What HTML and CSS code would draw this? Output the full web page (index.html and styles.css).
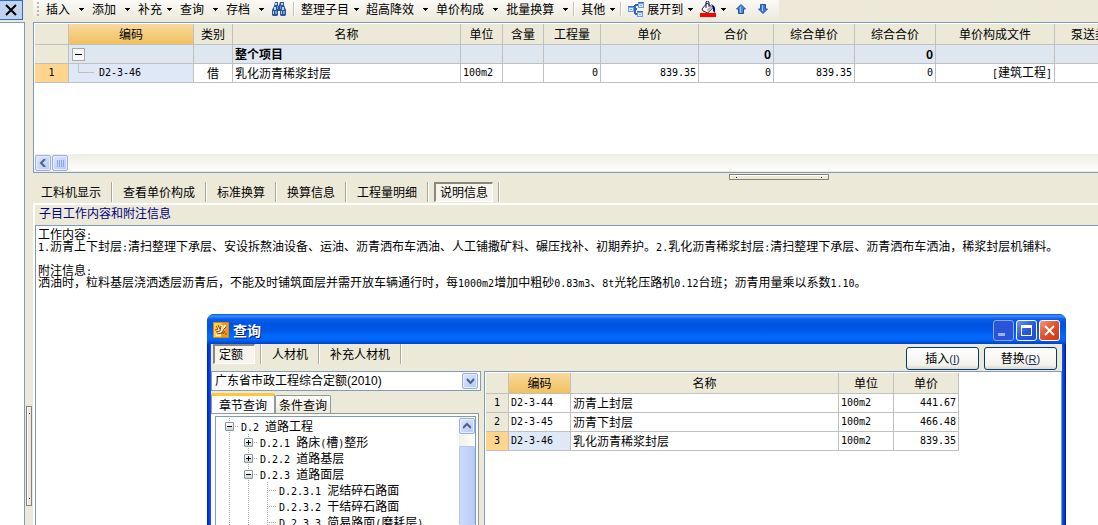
FILE: index.html
```html
<!DOCTYPE html>
<html lang="zh-CN">
<head>
<meta charset="utf-8">
<title>工程计价</title>
<link rel="stylesheet" href="styles.css">
</head>
<body>
<svg class="defs" aria-hidden="true">
  <symbol id="caret" viewBox="0 0 5 3"><path d="M0 0h5v1H4v1H3v1H2V2H1V1H0z"/></symbol>
</svg>
<div class="app">
  <aside class="side">
    <button class="side-close" aria-label="关闭"><svg width="12" height="12" viewBox="0 0 12 12"><path d="M1 1l10 10M11 1L1 11" stroke="#000" stroke-width="2" fill="none"/></svg></button>
    <div class="side-panel"></div>
  </aside>
  <div class="vsplit"><div class="handle handle-v"></div></div>
  <main class="main">
    <nav class="toolbar">
      <span class="grip"></span>
      <button class="tool split">插入<svg class="caret"><use href="#caret"/></svg></button>
      <button class="tool split">添加<svg class="caret"><use href="#caret"/></svg></button>
      <button class="tool drop">补充<svg class="caret"><use href="#caret"/></svg></button>
      <button class="tool split">查询<svg class="caret"><use href="#caret"/></svg></button>
      <button class="tool split tight">存档<svg class="caret"><use href="#caret"/></svg></button>
      <button class="tool" aria-label="查找"><svg width="16" height="14" viewBox="0 0 16 14"><path d="M4 0h3v3l1 1V3l1-3h4v3l2 5v5l-1 1h-4l-1-1V9H7v4l-1 1H2l-1-1V8l2-4z" fill="#2c5499"/><path d="M4 1h2v2H4zM10 1h2v2h-2zM3 5h2v3H3zM11 5h2v3h-2zM2 9h1v3H2zM10 9h1v3h-1z" fill="#b9d3f7"/><path d="M4 9h2v3H4zM12 9h2v3h-2zM6 4h1v3H6zM9 4h1v3H9z" fill="#6e9be0"/></svg></button>
      <span class="sep"></span>
      <button class="tool drop tight">整理子目<svg class="caret"><use href="#caret"/></svg></button>
      <button class="tool split">超高降效<svg class="caret"><use href="#caret"/></svg></button>
      <button class="tool split">单价构成<svg class="caret"><use href="#caret"/></svg></button>
      <button class="tool split tight">批量换算<svg class="caret"><use href="#caret"/></svg></button>
      <span class="sep"></span>
      <button class="tool drop tight">其他<svg class="caret"><use href="#caret"/></svg></button>
      <span class="sep"></span>
      <button class="tool drop tight"><svg class="lead" width="16" height="15" viewBox="0 0 16 15"><path d="M5 7h4M7 3v9M7 3h3M7 12h3" stroke="#2f66c4" stroke-width="2" fill="none"/><path d="M0 4h6v6H0zM10 0h6v6h-6zM9 9h6v6H9z" fill="#6c9bea"/><path d="M1 6h4v3H1zM11 2h4v3h-4zM10 11h4v3h-4z" fill="#dfeaff"/><path d="M0 4h6v1H0zM10 0h6v1h-6zM9 9h6v1H9z" fill="#3468c9"/><path d="M2 7h2v1H2zM12 3h2v1h-2zM11 12h2v1h-2z" fill="#86abed"/></svg>展开到<svg class="caret"><use href="#caret"/></svg></button>
      <button class="tool drop" aria-label="填充颜色"><svg width="16" height="16" viewBox="0 0 16 16"><path d="M2 8l5-6 6 5-5 5-5-2z" fill="#fff" stroke="#222" stroke-width="1"/><path d="M6 7V1q1-2 3 0v5" fill="none" stroke="#101070" stroke-width="1"/><path d="M7 8l5-3 1 2-5 5z" fill="#b4b4b4"/><path d="M11 3l3 2 1 2v5l-2-2V7z" fill="#000080"/><path d="M0 12h16v4H0z" fill="#f00"/></svg><svg class="caret"><use href="#caret"/></svg></button>
      <button class="tool arrow" aria-label="上移"><svg width="10" height="10" viewBox="0 0 10 10"><path d="M5 .5L9.500 5H7.500v4.500h-5V5H.5z" fill="#4d86e8" stroke="#2450a8"/><path d="M4 3h1v6H4z" fill="#a9c8fb"/></svg></button>
      <button class="tool arrow" aria-label="下移"><svg width="10" height="10" viewBox="0 0 10 10"><path d="M5 9.500L9.500 5H7.500V.5h-5V5H.5z" fill="#3f78e0" stroke="#2450a8"/><path d="M4 1h1v6H4z" fill="#a9c8fb"/></svg></button>
    </nav>

    <section class="grid-box">
      <table class="grid budget">
        <colgroup><col class="w34"><col class="w125"><col class="w39"><col class="w228"><col class="w42"><col class="w41"><col class="w57"><col class="w98"><col class="w75"><col class="w81"><col class="w81"><col class="w119"><col class="w81"></colgroup>
        <thead><tr><th></th><th class="active">编码</th><th>类别</th><th>名称</th><th>单位</th><th>含量</th><th>工程量</th><th>单价</th><th>合价</th><th>综合单价</th><th>综合合价</th><th>单价构成文件</th><th>泵送类型</th></tr></thead>
        <tbody>
          <tr class="total"><td class="rowno"></td><td class="code"><span class="node"><button class="fold" aria-label="折叠"></button></span></td><td></td><td>整个项目</td><td></td><td></td><td></td><td></td><td class="num">0</td><td></td><td class="num">0</td><td></td><td></td></tr>
          <tr><td class="rowno current n">1</td><td class="code picked"><span class="node"><i class="elbow"></i><span class="n">D2-3-46</span></span></td><td class="mid">借</td><td>乳化沥青稀浆封层</td><td class="n">100m2</td><td></td><td class="num n">0</td><td class="num n">839.35</td><td class="num n">0</td><td class="num n">839.35</td><td class="num n">0</td><td class="num"><span class="n">[</span>建筑工程<span class="n">]</span></td><td></td></tr>
        </tbody>
      </table>
      <div class="hscroll">
        <button class="sb" aria-label="向左"><svg width="8" height="8" viewBox="0 0 8 8"><path d="M6 0L2 4l4 4" fill="none" stroke="#4d6185" stroke-width="2"/></svg></button>
        <div class="sb thumb-h"><i></i><i></i><i></i><i></i></div>
      </div>
    </section>

    <div class="hsplit"><div class="handle handle-h"></div></div>

    <nav class="tabs detail-tabs">
      <button class="tab">工料机显示</button><button class="tab">查看单价构成</button><button class="tab">标准换算</button><button class="tab">换算信息</button><button class="tab">工程量明细</button><button class="tab pressed"><span>说明信息</span></button>
    </nav>

    <section class="detail">
      <h2 class="detail-title">子目工作内容和附注信息</h2>
      <div class="memo">
        <p>工作内容<span class="n">:</span></p>
        <p><span class="n">1.</span>沥青上下封层<span class="n">:</span>清扫整理下承层、安设拆熬油设备、运油、沥青洒布车洒油、人工铺撒矿料、碾压找补、初期养护。<span class="n">2.</span>乳化沥青稀浆封层<span class="n">:</span>清扫整理下承层、沥青洒布车洒油，稀浆封层机铺料。</p>
        <p>&nbsp;</p>
        <p>附注信息<span class="n">:</span></p>
        <p>洒油时，粒料基层浇洒透层沥青后，不能及时铺筑面层并需开放车辆通行时，每<span class="n">1000m2</span>增加中粗砂<span class="n">0.83m3</span>、<span class="n">8t</span>光轮压路机<span class="n">0.12</span>台班；沥青用量乘以系数<span class="n">1.10</span>。</p>
      </div>
    </section>
  </main>

  <section class="dialog" role="dialog" aria-labelledby="dlg-title">
    <header class="titlebar">
      <svg width="16" height="16" viewBox="0 0 16 16"><path d="M0 0h16v16H0z" fill="#d9860c"/><path d="M1 1h14v14H1z" fill="#fbd24a"/><path d="M9 1h6v14H8z" fill="#ef9a1d"/><path d="M4 5l2 4M9 3L8 9l-3 3M12 3l-2 6M3 13h5" stroke="#fff7d8" stroke-width="2" fill="none"/><path d="M3 4l2 3-3 1M5 3l2 4M8 4l-1 5-4 1M4 12l5-1 2-4 2-2M10 12l2-3M12 12h2" stroke="#8a3f08" stroke-width="1" fill="none"/></svg>
      <h1 id="dlg-title">查询</h1>
      <button class="cap dim" aria-label="最小化"><svg width="19" height="19" viewBox="0 0 19 19"><path d="M4 12h7v3H4z" fill="#9db4f0"/></svg></button>
      <button class="cap" aria-label="最大化"><svg width="19" height="19" viewBox="0 0 19 19"><path d="M4 4h11v11H4zM5 7v7h9V7z" fill="#fff" fill-rule="evenodd"/></svg></button>
      <button class="cap close" aria-label="关闭窗口"><svg width="19" height="19" viewBox="0 0 19 19"><path d="M5 5l9 9M14 5l-9 9" stroke="#fff" stroke-width="2" fill="none"/></svg></button>
    </header>
    <div class="dlg-body">
      <div class="dlg-bar">
        <nav class="tabs"><button class="tab pressed"><span>定额</span></button><button class="tab">人材机</button><button class="tab">补充人材机</button></nav>
        <button class="btn">插入<span class="key">(<u>I</u>)</span></button>
        <button class="btn">替换<span class="key">(<u>R</u>)</span></button>
      </div>
      <div class="dlg-cols">
        <div class="left">
          <div class="combo">
            <select aria-label="定额库"><option>广东省市政工程综合定额(2010)</option></select>
            <span class="sb combo-arrow"><svg width="9" height="7" viewBox="0 0 9 7"><path d="M1 1l3.500 4L8 1" fill="none" stroke="#4d6185" stroke-width="2"/></svg></span>
          </div>
          <nav class="pages"><button class="page on">章节查询</button><button class="page">条件查询</button></nav>
          <div class="sheet">
            <div class="tree">
              <ul>
                <li><i class="g v h"><b class="box"></b></i><span class="n">D.2 </span>道路工程</li>
                <li><i class="g v"></i><i class="g v h"><b class="box plus"></b></i><span class="n">D.2.1 </span>路床<span class="n">(</span>槽<span class="n">)</span>整形</li>
                <li><i class="g v"></i><i class="g v h"><b class="box plus"></b></i><span class="n">D.2.2 </span>道路基层</li>
                <li><i class="g v"></i><i class="g v h"><b class="box"></b></i><span class="n">D.2.3 </span>道路面层</li>
                <li><i class="g v"></i><i class="g v"></i><i class="g v h"></i><span class="n">D.2.3.1 </span>泥结碎石路面</li>
                <li><i class="g v"></i><i class="g v"></i><i class="g v h"></i><span class="n">D.2.3.2 </span>干结碎石路面</li>
                <li><i class="g v"></i><i class="g v"></i><i class="g v h"></i><span class="n">D.2.3.3 </span>简易路面<span class="n">(</span>磨耗层<span class="n">)</span></li>
              </ul>
              <div class="vscroll">
                <button class="sb" aria-label="向上"><svg width="8" height="8" viewBox="0 0 8 8"><path d="M0 6l4-4 4 4" fill="none" stroke="#4d6185" stroke-width="2"/></svg></button>
                <div class="thumb-v"></div>
              </div>
            </div>
          </div>
        </div>
        <div class="result">
          <table class="grid">
            <colgroup><col class="w23"><col class="w62"><col class="w268"><col class="w55"><col class="w65"></colgroup>
            <thead><tr><th></th><th class="active">编码</th><th>名称</th><th>单位</th><th>单价</th></tr></thead>
            <tbody>
              <tr><td class="rowno n">1</td><td class="n">D2-3-44</td><td>沥青上封层</td><td class="n">100m2</td><td class="num n">441.67</td></tr>
              <tr><td class="rowno n">2</td><td class="n">D2-3-45</td><td>沥青下封层</td><td class="n">100m2</td><td class="num n">466.48</td></tr>
              <tr><td class="rowno current n">3</td><td class="n picked">D2-3-46</td><td>乳化沥青稀浆封层</td><td class="n">100m2</td><td class="num n">839.35</td></tr>
            </tbody>
          </table>
        </div>
      </div>
    </div>
  </section>
</div>
</body>
</html>
```
FILE: styles.css
```css
* { box-sizing: border-box; }
body {
  margin: 0;
  background: #ece9d8;
  color: #000;
  font: 12px/16px "Noto Sans CJK SC", "Liberation Sans", sans-serif;
}
button, select { font: inherit; color: inherit; margin: 0; padding: 0; border: 0; background: none; }
h1, h2, p, ul { margin: 0; padding: 0; }
ul { list-style: none; }
svg { display: block; flex: none; }
.defs { position: absolute; width: 0; height: 0; }

/* Half-width Latin text: 6px per character */
.n { font-family: "DejaVu Sans Mono", monospace; font-size: 10px; white-space: pre; }

.app { display: flex; height: 100vh; overflow: hidden; position: relative; }

/* Left dock */
.side { width: 25px; flex: none; display: flex; flex-direction: column; gap: 2px; }
.side-close {
  width: 23px; height: 20px; border: 1px solid #316ac5; border-left: 0; background: #c1d2ee;
  display: flex; align-items: center; justify-content: center;
}
.side-panel { flex: 1; background: #fff; border: solid #7f9db9; border-width: 1px 1px 0 0; }

.vsplit { width: 8px; flex: none; padding: 406px 1px 0; }
.handle { border: 1px solid #848478; background: #ece9d8; box-shadow: inset 1px 1px #fff; display: flex; justify-content: space-between; align-items: center; }
.handle::before, .handle::after { content: ""; width: 1px; height: 1px; background: #000080; }
.handle-v { width: 6px; height: 100px; flex-direction: column; padding: 6px 0; }
.handle-h { width: 100px; height: 6px; padding: 0 6px; }

.main { flex: 1; min-width: 0; display: flex; flex-direction: column; }

/* Toolbar */
.toolbar {
  width: 746px; height: 22px; padding: 0 0 4px 4px; display: flex; align-items: center;
  background: linear-gradient(#fbfaf7, #f3f1e8 50%, #ebe8d9);
  white-space: nowrap;
}
.tool { display: flex; align-items: center; padding: 0 4px; height: 18px; flex: none; }
.grip { width: 2px; height: 14px; margin-right: 3px; flex: none; background: repeating-linear-gradient(#b9b5a3 0 2px, transparent 2px 4px); }
.caret { width: 5px; height: 3px; }
.split { gap: 9px; }
.drop { gap: 5px; }
.tight { padding-right: 3px; }
.lead { margin-right: -2px; }
.sep { width: 2px; height: 14px; margin: 0 2px; flex: none; border-left: 1px solid #c5c2b8; border-right: 1px solid #fff; }
.arrow { padding: 0 6px; }

/* Data grids */
.grid-box { height: 151px; flex: none; border: 1px solid #7f9db9; border-right: 0; padding: 1px 0 0 1px; background: #fff; overflow: hidden; display: flex; flex-direction: column; }
.grid { table-layout: fixed; border-collapse: separate; border-spacing: 0; }
.budget { width: 1101px; }
.grid th, .grid td { border: solid #c0c0c0; border-width: 0 1px 1px 0; overflow: hidden; white-space: nowrap; }
.grid th { height: 21px; padding: 0; font-weight: normal; background: #ece9d8; }
.grid td { height: 19px; padding: 0 2px; }
.grid th.active { background: linear-gradient(#f9d99f, #f1c15f); }
.grid .num { text-align: right; }
.grid .mid { text-align: center; }
.grid .rowno { text-align: center; background: #ece9d8; }
.grid .current { background: #ffd58d; }
.grid .picked { background: #dfe8f6; }
.total td { background: #dee6f0; font-weight: bold; }
.grid .code { padding: 0; }
.node { display: flex; align-items: center; height: 18px; padding-left: 3px; }
.fold { width: 13px; height: 13px; border: 1px solid #a9a9a9; background: linear-gradient(#000, #000) center / 7px 1px no-repeat, #f8f8f8; }
.elbow { width: 16px; height: 9px; margin: 0 5px 9px 6px; border: solid #c0c0c0; border-width: 0 0 1px 1px; }
.w23 { width: 23px; } .w34 { width: 34px; } .w39 { width: 39px; } .w41 { width: 41px; }
.w42 { width: 42px; } .w55 { width: 55px; } .w57 { width: 57px; } .w62 { width: 62px; }
.w65 { width: 65px; } .w75 { width: 75px; } .w81 { width: 81px; } .w98 { width: 98px; }
.w119 { width: 119px; } .w125 { width: 125px; } .w228 { width: 228px; } .w268 { width: 268px; }

/* Scroll bars */
.hscroll { margin-top: auto; height: 18px; display: flex; gap: 1px; padding: 1px 0; background: linear-gradient(#eeede5, #fefefb); border-bottom: 1px solid #eeede5; }
.sb { width: 16px; height: 16px; border: 1px solid #98b0e0; border-radius: 2px; background: linear-gradient(135deg, #dbe5fe, #b5c9f8); box-shadow: inset 0 0 0 1px #e7eefe; display: flex; align-items: center; justify-content: center; flex: none; }
.thumb-h { gap: 1px; }
.thumb-h i { width: 1px; height: 7px; background: #8ca6e8; }
.vscroll { width: 16px; padding-top: 1px; background: linear-gradient(to right, #f0efe8, #fefefb); display: flex; flex-direction: column; }
.vscroll .sb { margin-bottom: 12px; }
.thumb-v { flex: 1; border: 1px solid #b3c6f3; border-bottom: 0; border-radius: 2px; background: linear-gradient(to right, #cddafd, #b9ccf9); }

.hsplit { height: 8px; flex: none; padding: 1px 0 0 696px; }

/* Push-button tab rows */
.tabs { display: flex; align-items: center; }
.tab { height: 20px; padding: 0 10px; border-right: 1px solid #aca899; box-shadow: 1px 0 #fff; flex: none; }
.tab + .tab { margin-left: 1px; }
.tab.pressed { padding: 0 5px; }
.pressed span { display: block; height: 20px; padding: 0 4px; border: 1px solid #fff; border-top: 2px solid #8b887a; border-left: 2px solid #8b887a; background: #f6f4ec; line-height: 16px; text-align: left; }
.detail-tabs { height: 22px; }
.detail-tabs .tab:first-child { padding-left: 8px; }

.detail { flex: 1; min-height: 0; border: solid #fff; border-width: 2px 0 0 2px; display: flex; flex-direction: column; }
.detail-title { height: 20px; padding-left: 4px; font-size: 12px; font-weight: normal; line-height: 16px; color: #000080; }
.memo { flex: 1; background: #fff; border: solid #7f9db9; border-width: 1px 0 0 1px; padding: 2px; line-height: 12px; white-space: nowrap; overflow: hidden; }
.memo p { height: 12px; }

/* Query window */
.dialog {
  position: absolute; left: 207px; right: 32px; top: 314px; bottom: 0;
  display: flex; flex-direction: column;
  border-radius: 7px 7px 0 0;
  padding: 0 4px;
  background: linear-gradient(to right, #0018c8, #0a5cf0 4px, #0a5cf0 calc(100% - 4px), #0018b0);
  overflow: hidden;
}
.titlebar {
  height: 30px; flex: none; margin: 0 -4px; padding: 2px 6px 0; display: flex; align-items: center; gap: 2px; color: #fff;
  background: linear-gradient(#0a50d8 0, #3b92ff 2px, #0a5fe8 5px, #0054e0 10px, #0058ea 16px, #0069fb 22px, #0066f8 26px, #0040c8 30px);
}
.titlebar h1 { flex: 1; margin-left: 2px; font-size: 14px; line-height: 20px; text-shadow: 1px 1px #0a1883; }
.cap { width: 21px; height: 21px; border: 1px solid #fff; border-radius: 3px; background: linear-gradient(135deg, #6f96f0, #2858dc 50%, #1c4cd0); }
.cap.dim { border-color: #8ba6f0; background: #2a55d8; }
.cap.close { background: linear-gradient(135deg, #f09a80, #e04f2a 50%, #cc3a12); }
.dlg-body { flex: 1; min-height: 0; background: #ece9d8; display: flex; flex-direction: column; }
.dlg-bar { display: flex; height: 27px; padding: 0 5px 0 2px; gap: 5px; align-items: center; flex: none; }
.dlg-bar .tabs { flex: 1; align-self: flex-start; }
.dlg-bar .tab:first-child { padding-left: 0; }
.dlg-bar .pressed span { width: 42px; }
.btn { width: 73px; height: 23px; margin-top: 1px; border: 1px solid #003c74; border-radius: 3px; background: linear-gradient(#fff, #f3f2ec 80%, #dcd8cb); line-height: 18px; flex: none; }
.key { font-family: "Liberation Sans", sans-serif; font-size: 11px; color: #1d2b55; }
.dlg-cols { flex: 1; min-height: 0; display: flex; gap: 3px; }
.left { width: 270px; flex: none; display: flex; flex-direction: column; }
.combo { display: grid; grid-template-columns: 1fr 18px; height: 20px; background: #fff; border: 1px solid #7f9db9; }
.combo select { grid-area: 1 / 1 / 2 / 3; appearance: none; padding-left: 3px; font-family: "Liberation Sans", "Noto Sans CJK SC", sans-serif; width: 100%; }
.combo-arrow { grid-area: 1 / 2; pointer-events: none; margin-top: 1px; }
.pages { display: flex; align-items: flex-end; height: 22px; padding-top: 2px; flex: none; }
.page { width: 56px; height: 18px; line-height: 16px; border: 1px solid #919b9c; border-bottom: 0; border-radius: 2px 2px 0 0; background: linear-gradient(#fff, #ece9d8); }
.page.on { width: 64px; height: 20px; border-top: 3px solid #ffc73c; background: #fcfcfe; }
.sheet { flex: 1; min-height: 0; margin-right: 2px; padding: 2px 2px 0 4px; border: solid #919b9c; border-width: 1px 1px 0 0; background: #fbfbf8; display: flex; }
.tree { flex: 1; min-width: 0; border: 1px solid #7f9db9; border-bottom: 0; background: #fff; display: flex; overflow: hidden; }
.tree ul { flex: 1; padding: 1px 0 0 4px; }
.tree li { display: flex; align-items: baseline; height: 16px; white-space: nowrap; }
.g { width: 19px; height: 16px; flex: none; align-self: stretch; display: flex; align-items: center; justify-content: center; }
.v { background: repeating-linear-gradient(#aca899 0 1px, transparent 1px 2px) 9px 0 / 1px 100% no-repeat; }
.v.h { background: repeating-linear-gradient(#aca899 0 1px, transparent 1px 2px) 9px 0 / 1px 100% no-repeat, repeating-linear-gradient(to right, #aca899 0 1px, transparent 1px 2px) 9px 8px / 10px 1px no-repeat; }
.h + .n { margin-left: 2px; }
.box { width: 9px; height: 9px; margin-top: 1px; border: 1px solid #7898b5; border-radius: 1px; background: linear-gradient(#000, #000) center / 5px 1px no-repeat, linear-gradient(#fff, #d8d2c4); }
.box.plus { background: linear-gradient(#000, #000) center / 5px 1px no-repeat, linear-gradient(#000, #000) center / 1px 5px no-repeat, linear-gradient(#fff, #d8d2c4); }
.result { flex: 1; min-width: 0; background: #fff; border: solid #7f9db9; border-width: 1px 1px 0 1px; padding: 1px 0 0 1px; overflow: hidden; }
.result .grid { width: 473px; }
```
